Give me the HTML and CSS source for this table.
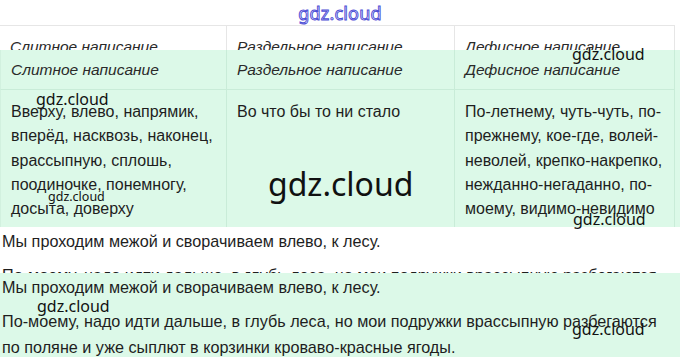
FILE: index.html
```html
<!DOCTYPE html>
<html lang="ru">
<head>
<meta charset="utf-8">
<title>gdz.cloud</title>
<link rel="stylesheet" href="styles.css">
</head>
<body>
<div class="page">
  <header class="topbar"><span class="logo">gdz.cloud</span></header>

  <div class="peek peek-table">
    <div class="tbl tbl-white">
      <div class="th">Слитное написание</div>
      <div class="th">Раздельное написание</div>
      <div class="th">Дефисное написание</div>
    </div>
  </div>

  <div class="mint mint-table">
    <div class="tbl tbl-mint">
      <div class="th">Слитное написание</div>
      <div class="th">Раздельное написание</div>
      <div class="th">Дефисное написание</div>
      <div class="td">Вверху, влево, напрямик,<br>вперёд, насквозь, наконец,<br>врассыпную, сплошь,<br>поодиночке, понемногу,<br>досыта, доверху</div>
      <div class="td">Во что бы то ни стало</div>
      <div class="td">По-летнему, чуть-чуть, по-<br>прежнему, кое-где, волей-<br>неволей, крепко-накрепко,<br>нежданно-негаданно, по-<br>моему, видимо-невидимо</div>
    </div>
  </div>

  <div class="peek peek-text">
    <p>Мы проходим межой и сворачиваем влево, к лесу.</p>
    <p>По-моему, надо идти дальше, в глубь леса, но мои подружки врассыпную разбегаются<br>по поляне и уже сыплют в корзинки кроваво-красные ягоды.</p>
  </div>

  <div class="mint mint-text">
    <p>Мы проходим межой и сворачиваем влево, к лесу.</p>
    <p>По-моему, надо идти дальше, в глубь леса, но мои подружки врассыпную разбегаются<br>по поляне и уже сыплют в корзинки кроваво-красные ягоды.</p>
  </div>

  <span class="wm wm1">gdz.cloud</span>
  <span class="wm wm2">gdz.cloud</span>
  <span class="wm wm-big">gdz.cloud</span>
  <span class="wm wm-small">gdz.cloud</span>
  <span class="wm wm4">gdz.cloud</span>
  <span class="wm wm5">gdz.cloud</span>
  <span class="wm wm6">gdz.cloud</span>
</div>
</body>
</html>
```

FILE: styles.css
```css
html, body {
  margin: 0;
  padding: 0;
  background: #ffffff;
}
.page {
  position: relative;
  width: 680px;
  height: 357px;
  overflow: hidden;
  font-family: "Liberation Sans", Arial, sans-serif;
  color: #1e1e1e;
}
.topbar {
  height: 25px;
  display: flex;
  justify-content: center;
  align-items: center;
}
.logo {
  font-family: "Noto Sans", sans-serif;
  font-size: 18px;
  line-height: 1;
  color: #ffffff;
  -webkit-text-stroke: 1px #4f4fd6;
  letter-spacing: 0.2px;
}
.peek {
  overflow: hidden;
  background: #ffffff;
}
.peek-table { height: 25px; }
.peek-text { height: 46px; }
.mint {
  background: #dcf9e8;
}
.mint-table { height: 177px; overflow: hidden; }
.mint-text { height: 84px; overflow: hidden; }

.tbl {
  width: 675px;
  display: grid;
  grid-template-columns: 227px 228px 220px;
}
.tbl-white {
  border-top: 1px solid #e6e6e6;
}
.th {
  height: 40px;
  box-sizing: border-box;
  display: flex;
  align-items: center;
  padding: 0 10px;
  font-size: 15.5px;
  font-style: italic;
  color: #2a2a2a;
  white-space: nowrap;
}
.tbl-white .th {
  padding-top: 2px;
  border-right: 1px solid #e6e6e6;
}
.tbl-mint .th {
  border-right: 1px solid #c9ecd8;
  border-bottom: 1px solid #c9ecd8;
}
.td {
  padding: 10px 2px 0 10px;
  font-size: 16px;
  line-height: 24.3px;
  border-right: 1px solid #c9ecd8;
  height: 137px;
  box-sizing: border-box;
  white-space: nowrap;
}
.tbl-mint .th:first-child,
.tbl-mint .td:nth-child(4) {
  border-left: 1px solid #d2f1df;
}

.peek-text p,
.mint-text p {
  margin: 0 0 7px 0;
  padding: 1px 0 0 2px;
  font-size: 16.2px;
  line-height: 26px;
  color: #1e1e1e;
  white-space: nowrap;
}

.wm {
  position: absolute;
  font-family: "Noto Sans", sans-serif;
  font-size: 16px;
  line-height: 1;
  color: #111111;
  white-space: nowrap;
}
.wm1 { left: 572px; top: 46px; }
.wm2 { left: 36px; top: 91px; }
.wm-big { left: 268px; top: 168px; font-size: 32px; }
.wm-small { left: 48px; top: 191px; font-size: 12.5px; }
.wm4 { left: 573px; top: 211px; }
.wm5 { left: 37px; top: 298px; }
.wm6 { left: 572px; top: 321px; }
```
